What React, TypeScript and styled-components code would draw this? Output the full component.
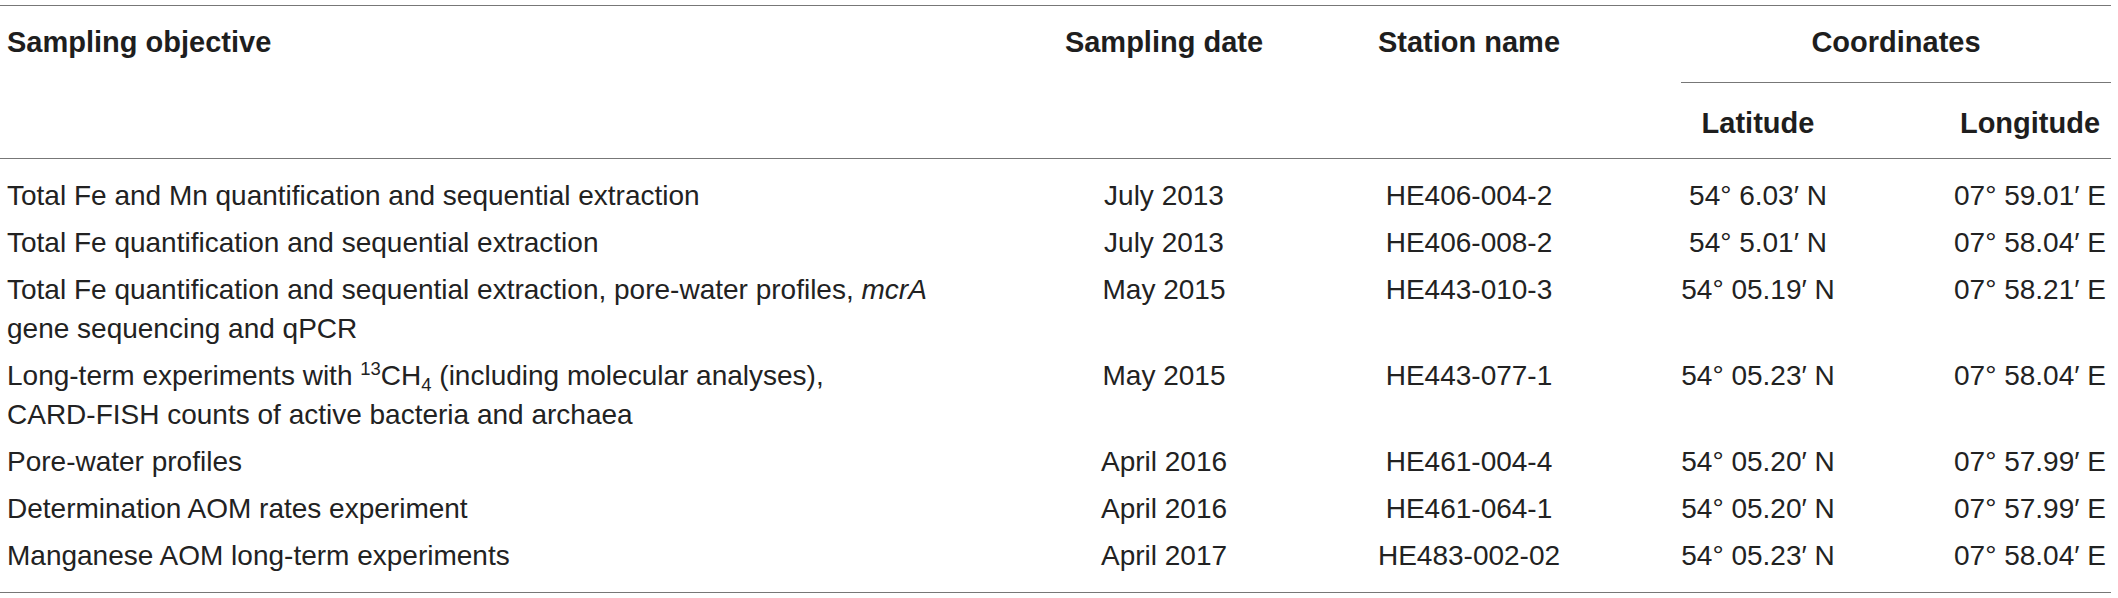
import * as React from 'react';
import styled, { createGlobalStyle } from 'styled-components';

const GlobalStyle = createGlobalStyle`
  html, body {
    margin: 0;
    padding: 0;
    background: #fff;
  }
  body {
    font-family: "Liberation Sans", Arial, sans-serif;
  }
`;

const Table = styled.table`
  width: 2111px;
  margin-top: 5px;
  table-layout: fixed;
  border-collapse: separate;
  border-spacing: 0;
  border-top: 1px solid #777;
  border-bottom: 1px solid #777;
  color: #222;
  font-family: "Liberation Sans", Arial, sans-serif;
`;

const Col = styled.col<{ $w: number }>`
  width: ${(p) => p.$w}px;
`;

const HeadCell = styled.th<{ $align?: 'left' | 'center'; $padLeft?: number; $lower?: boolean }>`
  font-size: 29px;
  font-weight: 700;
  line-height: 38px;
  color: #1e1e1e;
  white-space: nowrap;
  vertical-align: top;
  text-align: ${(p) => p.$align ?? 'center'};
  padding: ${(p) => (p.$lower ? '21px 0 16px' : '17px 0 16px')};
  padding-left: ${(p) => p.$padLeft ?? 0}px;
  border-bottom: 1px solid #777;
`;

const SpanCell = styled.th`
  font-size: 29px;
  font-weight: 700;
  line-height: 38px;
  color: #1e1e1e;
  white-space: nowrap;
  vertical-align: top;
  text-align: center;
  padding: 17px 0 0 31px;
`;

const SpanLabel = styled.div`
  padding-bottom: 21px;
  border-bottom: 1px solid #777;
`;

const Body = styled.tbody`
  tr:first-child td {
    padding-top: 17px;
  }
  tr:last-child td {
    padding-bottom: 17px;
  }
`;

const Cell = styled.td<{ $align?: 'left' | 'center'; $padLeft?: number }>`
  font-size: 28px;
  line-height: 39px;
  vertical-align: top;
  white-space: nowrap;
  text-align: ${(p) => p.$align ?? 'center'};
  padding: 4px 0;
  padding-left: ${(p) => p.$padLeft ?? 0}px;
`;

const Sup = styled.sup`
  font-size: 0.66em;
  line-height: 0;
  vertical-align: 0.55em;
`;

const Sub = styled.sub`
  font-size: 0.66em;
  line-height: 0;
  vertical-align: -0.3em;
`;

type Row = {
  objective: React.ReactNode;
  date: string;
  station: string;
  lat: string;
  lon: string;
};

const rows: Row[] = [
  {
    objective: 'Total Fe and Mn quantification and sequential extraction',
    date: 'July 2013',
    station: 'HE406-004-2',
    lat: '54° 6.03′ N',
    lon: '07° 59.01′ E',
  },
  {
    objective: 'Total Fe quantification and sequential extraction',
    date: 'July 2013',
    station: 'HE406-008-2',
    lat: '54° 5.01′ N',
    lon: '07° 58.04′ E',
  },
  {
    objective: (
      <>
        Total Fe quantification and sequential extraction, pore-water profiles, <em>mcrA</em>
        <br />
        gene sequencing and qPCR
      </>
    ),
    date: 'May 2015',
    station: 'HE443-010-3',
    lat: '54° 05.19′ N',
    lon: '07° 58.21′ E',
  },
  {
    objective: (
      <>
        Long-term experiments with <Sup>13</Sup>CH<Sub>4</Sub> (including molecular analyses),
        <br />
        CARD-FISH counts of active bacteria and archaea
      </>
    ),
    date: 'May 2015',
    station: 'HE443-077-1',
    lat: '54° 05.23′ N',
    lon: '07° 58.04′ E',
  },
  {
    objective: 'Pore-water profiles',
    date: 'April 2016',
    station: 'HE461-004-4',
    lat: '54° 05.20′ N',
    lon: '07° 57.99′ E',
  },
  {
    objective: 'Determination AOM rates experiment',
    date: 'April 2016',
    station: 'HE461-064-1',
    lat: '54° 05.20′ N',
    lon: '07° 57.99′ E',
  },
  {
    objective: 'Manganese AOM long-term experiments',
    date: 'April 2017',
    station: 'HE483-002-02',
    lat: '54° 05.23′ N',
    lon: '07° 58.04′ E',
  },
];

export default function App() {
  return (
    <>
      <GlobalStyle />
      <Table>
        <colgroup>
          <Col $w={1040} />
          <Col $w={248} />
          <Col $w={362} />
          <Col $w={216} />
          <Col $w={245} />
        </colgroup>
        <thead>
          <tr>
            <HeadCell rowSpan={2} $align="left" $padLeft={7}>
              Sampling objective
            </HeadCell>
            <HeadCell rowSpan={2}>Sampling date</HeadCell>
            <HeadCell rowSpan={2}>Station name</HeadCell>
            <SpanCell colSpan={2}>
              <SpanLabel>Coordinates</SpanLabel>
            </SpanCell>
          </tr>
          <tr>
            <HeadCell $lower>Latitude</HeadCell>
            <HeadCell $lower $padLeft={83}>
              Longitude
            </HeadCell>
          </tr>
        </thead>
        <Body>
          {rows.map((r) => (
            <tr key={r.station}>
              <Cell $align="left" $padLeft={7}>
                {r.objective}
              </Cell>
              <Cell>{r.date}</Cell>
              <Cell>{r.station}</Cell>
              <Cell>{r.lat}</Cell>
              <Cell $padLeft={83}>{r.lon}</Cell>
            </tr>
          ))}
        </Body>
      </Table>
    </>
  );
}
